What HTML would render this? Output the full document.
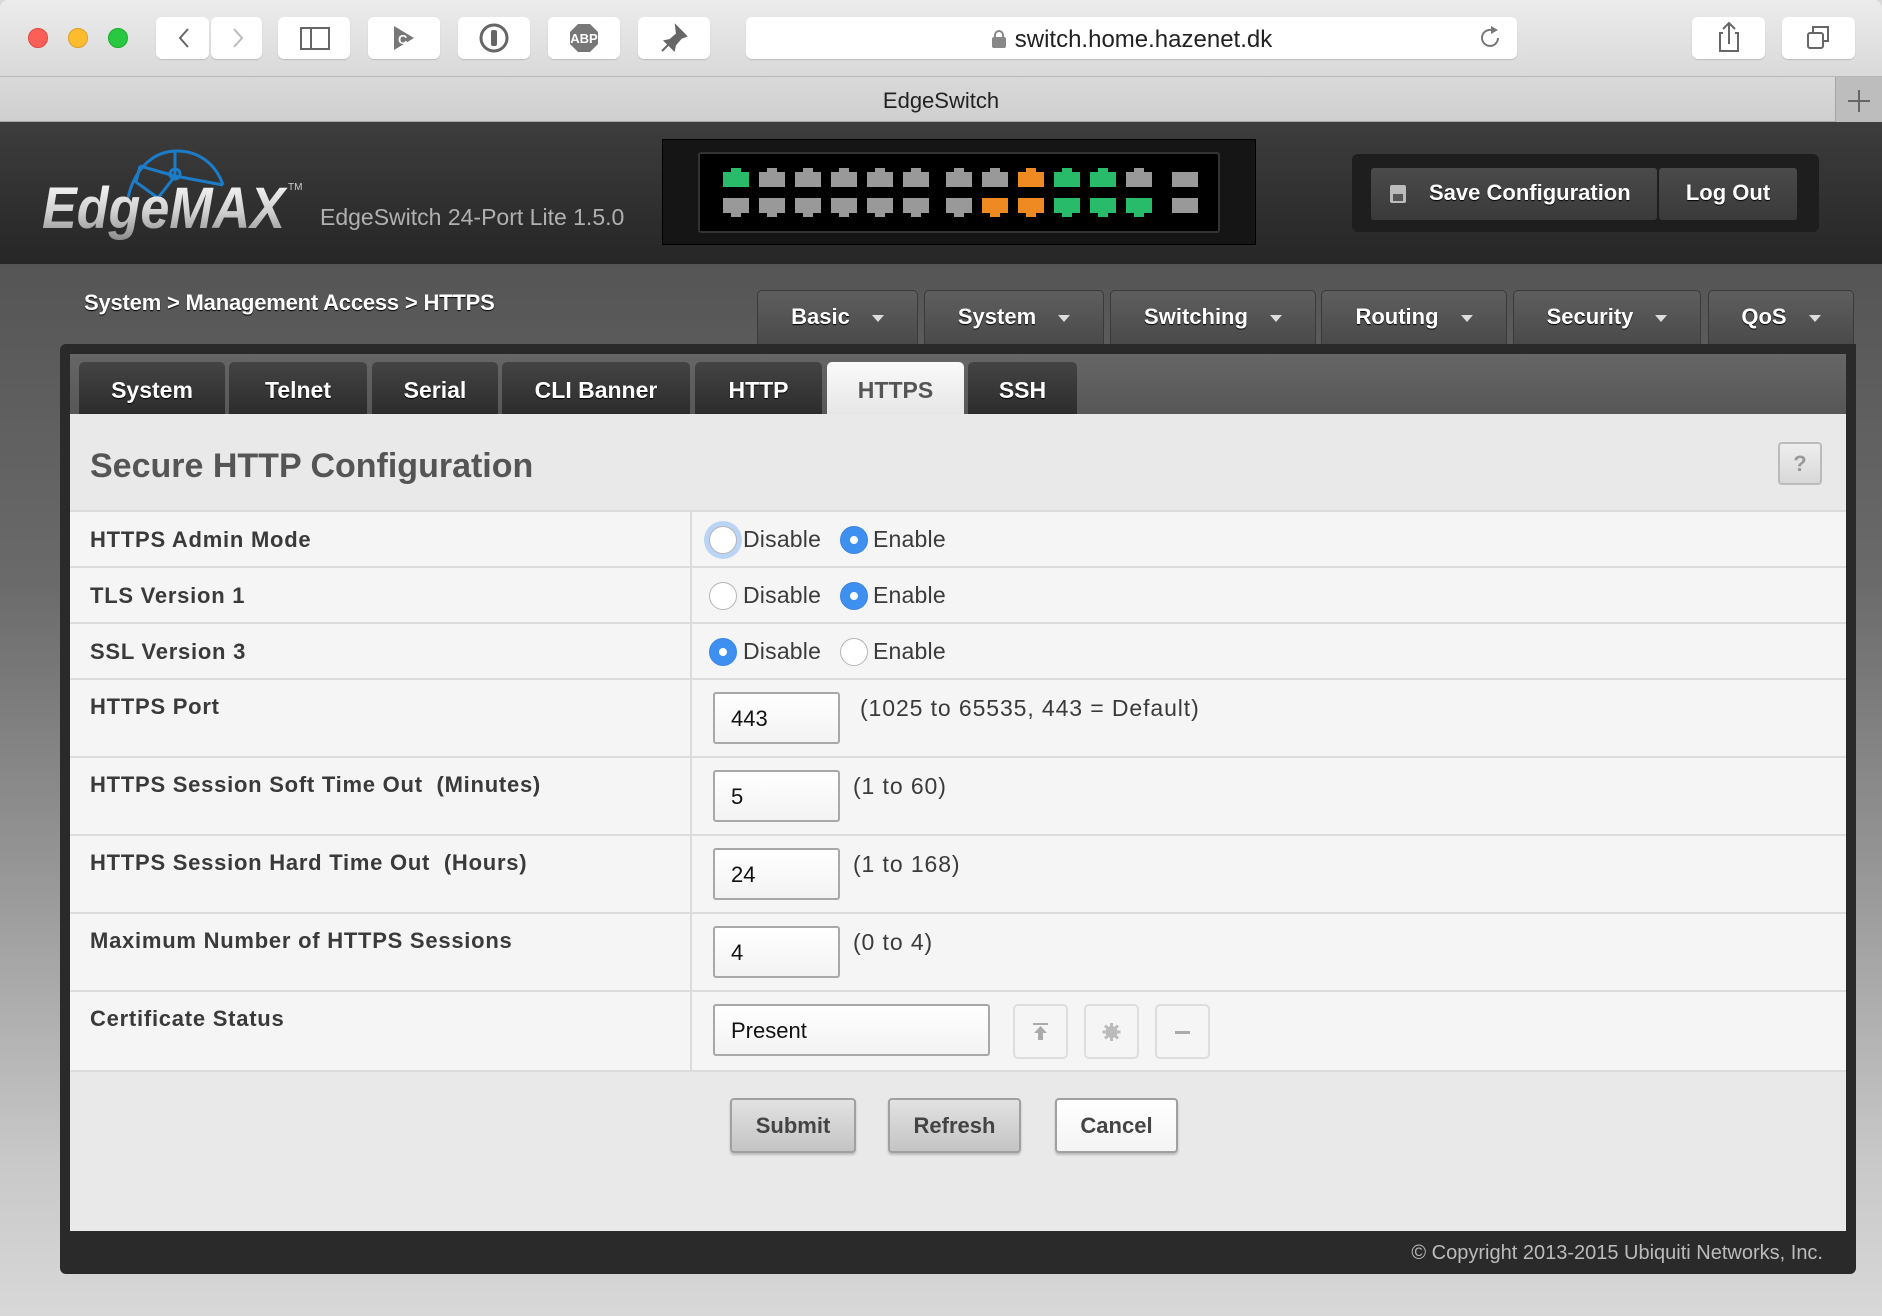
<!DOCTYPE html>
<html><head><meta charset="utf-8"><style>
*{box-sizing:border-box;margin:0;padding:0}
body{width:1882px;height:1316px;position:relative;overflow:hidden;font-family:"Liberation Sans",sans-serif;background:#d8d8d8}
.a{position:absolute}
.tb{position:absolute;top:17px;height:42px;background:#fff;border-radius:6px;box-shadow:0 1px 1px rgba(0,0,0,.15)}
.nav{position:absolute;top:290px;height:54px;border-radius:5px 5px 0 0;background:linear-gradient(#5e5e5e,#4a4a4a);border:1px solid #3a3a3a;border-bottom:none;color:#fff;font-weight:bold;font-size:22px;line-height:52px;text-shadow:0 1px 1px #000;padding-left:0;text-align:center}
.nav i{display:inline-block;width:0;height:0;border-left:6px solid transparent;border-right:6px solid transparent;border-top:7px solid #ddd;margin-left:22px;vertical-align:middle}
.st{position:absolute;top:362px;height:52px;border-radius:5px 5px 0 0;background:linear-gradient(#444,#2c2c2c);color:#fff;font-weight:bold;font-size:23px;line-height:56px;text-align:center;text-shadow:0 1px 1px #000}
.row{position:absolute;left:70px;width:1776px;background:#f5f5f5;border-bottom:2px solid #dcdcdc}
.lab{position:absolute;left:20px;font-weight:bold;font-size:22px;color:#3a3a3a;letter-spacing:0.75px}
.rad{position:absolute;width:28px;height:28px;border-radius:50%;background:#fff;border:1px solid #b5b5b5}
.rad.on{background:#3d8ff0;border-color:#3a86e0}
.rad.on:after{content:"";position:absolute;left:9px;top:9px;width:8px;height:8px;border-radius:50%;background:#fff}
.rt{position:absolute;font-size:23px;color:#3a3a3a;letter-spacing:0.2px}
.inp{position:absolute;left:713px;width:127px;height:52px;background:linear-gradient(#fff,#f3f3f3);border:2px solid #a8a8a8;border-radius:3px;font-size:22px;padding-left:16px;line-height:50px;color:#111}
.hint{position:absolute;font-size:23px;color:#3a3a3a;letter-spacing:0.9px}
.ib{position:absolute;top:1004px;width:55px;height:55px;border:2px solid #ddd;border-radius:5px;background:#f5f5f5}
.btn{position:absolute;top:1098px;height:55px;border:2px solid #a0a0a0;border-radius:4px;background:linear-gradient(#e2e2e2,#c4c4c4);font-weight:bold;font-size:22px;color:#444;text-align:center;line-height:51px;box-shadow:0 2px 2px rgba(0,0,0,.2)}
</style></head><body>
<div class="a" style="left:0;top:0;width:1882px;height:77px;background:linear-gradient(#ececec,#d9d9d9);border-bottom:1px solid #b8b8b8;border-radius:8px 8px 0 0"></div>
<div class="a" style="left:28px;top:28px;width:20px;height:20px;border-radius:50%;background:#fc5f57;border:1px solid #df4741"></div>
<div class="a" style="left:68px;top:28px;width:20px;height:20px;border-radius:50%;background:#fdbc2e;border:1px solid #de9f25"></div>
<div class="a" style="left:108px;top:28px;width:20px;height:20px;border-radius:50%;background:#28c840;border:1px solid #1eab2e"></div>
<div class="tb" style="left:156px;width:53px"></div>
<div class="tb" style="left:211px;width:51px"></div>
<svg class="a" style="left:156px;top:17px" width="106" height="42"><path d="M32 12 L24 21 L32 30" stroke="#666" stroke-width="2" fill="none"/><path d="M78 12 L86 21 L78 30" stroke="#bbb" stroke-width="2" fill="none"/></svg>
<div class="tb" style="left:278px;width:72px"><svg width="72" height="42"><rect x="23" y="11" width="28" height="21" fill="none" stroke="#666" stroke-width="2"/><line x1="33" y1="11" x2="33" y2="32" stroke="#666" stroke-width="2"/></svg></div>
<div class="tb" style="left:368px;width:72px"><svg width="72" height="42"><path d="M26 9 L46 21 L26 33Z" fill="#777"/><text x="30" y="27" font-size="13" font-weight="bold" fill="#fff" font-family="Liberation Sans">C</text></svg></div>
<div class="tb" style="left:458px;width:72px"><svg width="72" height="42"><circle cx="36" cy="21" r="13" fill="none" stroke="#666" stroke-width="3"/><rect x="33" y="13" width="6" height="16" rx="2" fill="#666"/></svg></div>
<div class="tb" style="left:548px;width:72px"><svg width="72" height="42"><polygon points="30,7 42,7 50,15 50,27 42,35 30,35 22,27 22,15" fill="#777"/><text x="36" y="26" font-size="13" font-weight="bold" fill="#fff" text-anchor="middle" font-family="Liberation Sans">ABP</text></svg></div>
<div class="tb" style="left:638px;width:72px"><svg width="72" height="42"><path d="M38 9 L48 19 L43 21 L37 28 L36 33 L27 24 L32 23 L39 17Z M31 27 L24 34" fill="#666" stroke="#666" stroke-width="2"/></svg></div>
<div class="tb" style="left:746px;width:771px"><div class="a" style="left:0;width:771px;top:9px;text-align:center;font-size:24px;color:#222"><svg width="16" height="18" style="vertical-align:-1px;margin-right:8px"><rect x="1" y="7" width="14" height="11" rx="2" fill="#888"/><path d="M4 8 V5 a4 4 0 0 1 8 0 V8" fill="none" stroke="#888" stroke-width="2"/></svg>switch.home.hazenet.dk</div>
<svg class="a" style="left:730px;top:6px" width="30" height="30"><path d="M22 15 A8 8 0 1 1 17 7.5" fill="none" stroke="#777" stroke-width="2"/><path d="M15 3 L22 7 L15 11Z" fill="#777"/></svg></div>
<div class="tb" style="left:1692px;width:73px"><svg width="73" height="42"><path d="M31 16 H28 V34 H46 V16 H43" fill="none" stroke="#666" stroke-width="2"/><path d="M37 27 V6 M31 12 L37 6 L43 12" fill="none" stroke="#666" stroke-width="2"/></svg></div>
<div class="tb" style="left:1782px;width:73px"><svg width="73" height="42"><rect x="26" y="16" width="15" height="15" rx="2" fill="none" stroke="#666" stroke-width="2"/><path d="M31 15 V10 H46 V24 H42" fill="none" stroke="#666" stroke-width="2"/></svg></div>
<div class="a" style="left:0;top:77px;width:1882px;height:45px;background:linear-gradient(#d9d9d9,#cfcfcf);border-bottom:1px solid #a8a8a8"></div>
<div class="a" style="left:1835px;top:77px;width:47px;height:45px;background:#bdbdbd;border-left:1px solid #a5a5a5"></div>
<svg class="a" style="left:1846px;top:88px" width="26" height="26"><path d="M13 2 V24 M2 13 H24" stroke="#666" stroke-width="2"/></svg>
<div class="a" style="left:0;top:88px;width:1882px;text-align:center;font-size:22px;color:#222">EdgeSwitch</div>
<div class="a" style="left:0;top:122px;width:1882px;height:142px;background:linear-gradient(#3d3d3d,#262626)"></div>
<svg class="a" style="left:40px;top:140px" width="280" height="110">
<defs><linearGradient id="sg" x1="0" y1="0" x2="0" y2="1"><stop offset="0" stop-color="#fff"/><stop offset=".55" stop-color="#d0d0d0"/><stop offset="1" stop-color="#8a8a8a"/></linearGradient></defs>
<path d="M88 58 C94 30 112 12 135 11 C158 10 176 24 183 45 M100 26 L135 36 L183 45 M135 36 L118 58 M135 11 L135 36 M100 26 L96 42 L118 58" fill="none" stroke="#1d7cc8" stroke-width="3"/>
<circle cx="135" cy="34" r="5" fill="none" stroke="#1d7cc8" stroke-width="3"/>
<text x="2" y="88" font-family="Liberation Sans" font-weight="bold" font-style="italic" font-size="58" fill="url(#sg)" textLength="243" lengthAdjust="spacingAndGlyphs">EdgeMAX</text>
<text x="248" y="50" font-family="Liberation Sans" font-size="10" fill="#ccc">TM</text>
</svg>
<div class="a" style="left:320px;top:204px;font-size:23px;color:#b0b0b0">EdgeSwitch 24-Port Lite 1.5.0</div>
<div class="a" style="left:662px;top:139px;width:594px;height:106px;background:#151515;border:1px solid #000"></div>
<div class="a" style="left:698px;top:152px;width:522px;height:81px;background:#000;border:2px solid #333;border-radius:3px"></div>
<div class="a" style="left:1352px;top:154px;width:467px;height:78px;background:#1e1e1e;border-radius:6px"></div>
<div class="a" style="left:1371px;top:168px;width:286px;height:52px;background:linear-gradient(#4a4a4a,#3a3a3a);border-radius:3px;color:#fff;font-size:22px;font-weight:bold;line-height:50px;padding-left:58px;text-shadow:0 1px 1px #000">Save Configuration</div>
<svg class="a" style="left:1388px;top:183px" width="20" height="22"><rect x="2" y="2" width="16" height="18" rx="2" fill="#bbb"/><rect x="5" y="11" width="10" height="7" fill="#555"/></svg>
<div class="a" style="left:1659px;top:168px;width:138px;height:52px;background:linear-gradient(#4a4a4a,#3a3a3a);border-radius:3px;color:#fff;font-size:22px;font-weight:bold;line-height:50px;text-align:center;text-shadow:0 1px 1px #000">Log Out</div>
<div class="a" style="left:0;top:264px;width:1882px;height:1052px;background:linear-gradient(#555 0%,#6a6a6a 30%,#9a9a9a 60%,#c8c8c8 85%,#d8d8d8 100%)"></div>
<div class="a" style="left:84px;top:290px;font-size:22px;font-weight:bold;color:#fff;text-shadow:0 1px 1px #000;letter-spacing:-0.2px">System &gt; Management Access &gt; HTTPS</div>
<div class="nav" style="left:757px;width:161px">Basic<i></i></div>
<div class="nav" style="left:924px;width:180px">System<i></i></div>
<div class="nav" style="left:1110px;width:206px">Switching<i></i></div>
<div class="nav" style="left:1321px;width:186px">Routing<i></i></div>
<div class="nav" style="left:1513px;width:188px">Security<i></i></div>
<div class="nav" style="left:1708px;width:146px">QoS<i></i></div>
<div class="a" style="left:60px;top:344px;width:1796px;height:930px;background:#2a2a2a;border-radius:6px 0 6px 6px"></div>
<div class="a" style="left:70px;top:354px;width:1776px;height:60px;background:linear-gradient(#666,#575757)"></div>
<div class="st" style="left:79px;width:146px">System</div>
<div class="st" style="left:229px;width:138px">Telnet</div>
<div class="st" style="left:372px;width:126px">Serial</div>
<div class="st" style="left:502px;width:188px">CLI Banner</div>
<div class="st" style="left:695px;width:127px">HTTP</div>
<div class="st" style="left:827px;width:137px;background:linear-gradient(#fafafa,#e6e6e6);color:#555;text-shadow:none">HTTPS</div>
<div class="st" style="left:968px;width:109px">SSH</div>
<div class="a" style="left:70px;top:414px;width:1776px;height:817px;background:#e9e9e9"></div>
<div class="a" style="left:90px;top:447px;font-size:34px;font-weight:bold;color:#555">Secure HTTP Configuration</div>
<div class="a" style="left:1778px;top:442px;width:44px;height:43px;border:2px solid #bbb;border-radius:4px;background:linear-gradient(#eee,#d8d8d8);text-align:center;line-height:39px;font-size:22px;font-weight:bold;color:#999">?</div>
<div class="a" style="left:70px;top:510px;width:1776px;height:2px;background:#dcdcdc"></div>
<div class="row" style="top:512px;height:56px"><div class="lab" style="top:15px">HTTPS Admin Mode</div></div>
<div class="row" style="top:568px;height:56px"><div class="lab" style="top:15px">TLS Version 1</div></div>
<div class="row" style="top:624px;height:56px"><div class="lab" style="top:15px">SSL Version 3</div></div>
<div class="row" style="top:680px;height:78px"><div class="lab" style="top:14px">HTTPS Port</div></div>
<div class="row" style="top:758px;height:78px"><div class="lab" style="top:14px">HTTPS Session Soft Time Out&nbsp; (Minutes)</div></div>
<div class="row" style="top:836px;height:78px"><div class="lab" style="top:14px">HTTPS Session Hard Time Out&nbsp; (Hours)</div></div>
<div class="row" style="top:914px;height:78px"><div class="lab" style="top:14px">Maximum Number of HTTPS Sessions</div></div>
<div class="row" style="top:992px;height:80px"><div class="lab" style="top:14px">Certificate Status</div></div>
<div class="a" style="left:690px;top:512px;width:2px;height:558px;background:#dcdcdc"></div>
<div class="a" style="left:704px;top:521px;width:38px;height:38px;border-radius:50%;background:#b9d5f5"></div>
<div class="rad" style="left:709px;top:526px"></div><div class="rt" style="left:743px;top:526px">Disable</div>
<div class="rad on" style="left:840px;top:526px"></div><div class="rt" style="left:873px;top:526px">Enable</div>
<div class="rad" style="left:709px;top:582px"></div><div class="rt" style="left:743px;top:582px">Disable</div>
<div class="rad on" style="left:840px;top:582px"></div><div class="rt" style="left:873px;top:582px">Enable</div>
<div class="rad on" style="left:709px;top:638px"></div><div class="rt" style="left:743px;top:638px">Disable</div>
<div class="rad" style="left:840px;top:638px"></div><div class="rt" style="left:873px;top:638px">Enable</div>
<div class="inp" style="top:692px">443</div><div class="hint" style="left:860px;top:695px">(1025 to 65535, 443 = Default)</div>
<div class="inp" style="top:770px">5</div><div class="hint" style="left:853px;top:773px">(1 to 60)</div>
<div class="inp" style="top:848px">24</div><div class="hint" style="left:853px;top:851px">(1 to 168)</div>
<div class="inp" style="top:926px">4</div><div class="hint" style="left:853px;top:929px">(0 to 4)</div>
<div class="inp" style="top:1004px;width:277px">Present</div>
<div class="ib" style="left:1013px"><svg width="51" height="51"><rect x="18" y="17" width="15" height="2" fill="#aaa"/><path d="M25.5 20 L19 27 H23 V34 H28 V27 H32Z" fill="#aaa"/></svg></div>
<div class="ib" style="left:1084px"><svg width="51" height="51"><circle cx="25.5" cy="26" r="6" fill="#bbb"/><g stroke="#bbb" stroke-width="3"><path d="M25.5 17 V35 M16.5 26 H34.5 M19 19.5 L32 32.5 M32 19.5 L19 32.5"/></g></svg></div>
<div class="ib" style="left:1155px"><svg width="51" height="51"><rect x="18" y="25" width="15" height="3" fill="#aaa"/></svg></div>
<div class="btn" style="left:730px;width:126px">Submit</div>
<div class="btn" style="left:888px;width:133px">Refresh</div>
<div class="btn" style="left:1055px;width:123px;background:linear-gradient(#fff,#f4f4f4)">Cancel</div>
<div class="a" style="right:59px;top:1242px;font-size:20px;color:#bbb">© Copyright 2013-2015 Ubiquiti Networks, Inc.</div>
<svg class="a" style="left:698px;top:152px" width="522" height="81">
<defs>
<path id="pt" d="M0 4 H8 V0 H18 V4 H26 V19 H0Z"/>
<path id="pb" d="M0 0 H26 V15 H18 V19 H8 V15 H0Z"/>
</defs>
<g>
<use href="#pt" x="25" y="16" fill="#27bb6a"/>
<use href="#pt" x="61" y="16" fill="#999"/><use href="#pt" x="97" y="16" fill="#999"/><use href="#pt" x="133" y="16" fill="#999"/><use href="#pt" x="169" y="16" fill="#999"/><use href="#pt" x="205" y="16" fill="#999"/>
<use href="#pt" x="248" y="16" fill="#999"/><use href="#pt" x="284" y="16" fill="#999"/><use href="#pt" x="320" y="16" fill="#ef8a22"/><use href="#pt" x="356" y="16" fill="#27bb6a"/><use href="#pt" x="392" y="16" fill="#27bb6a"/><use href="#pt" x="428" y="16" fill="#999"/>
<rect x="474" y="20" width="26" height="15" fill="#999"/>
<use href="#pb" x="25" y="46" fill="#999"/><use href="#pb" x="61" y="46" fill="#999"/><use href="#pb" x="97" y="46" fill="#999"/><use href="#pb" x="133" y="46" fill="#999"/><use href="#pb" x="169" y="46" fill="#999"/><use href="#pb" x="205" y="46" fill="#999"/>
<use href="#pb" x="248" y="46" fill="#999"/><use href="#pb" x="284" y="46" fill="#ef8a22"/><use href="#pb" x="320" y="46" fill="#ef8a22"/><use href="#pb" x="356" y="46" fill="#27bb6a"/><use href="#pb" x="392" y="46" fill="#27bb6a"/><use href="#pb" x="428" y="46" fill="#27bb6a"/>
<rect x="474" y="46" width="26" height="15" fill="#999"/>
</g></svg>
</body></html>
